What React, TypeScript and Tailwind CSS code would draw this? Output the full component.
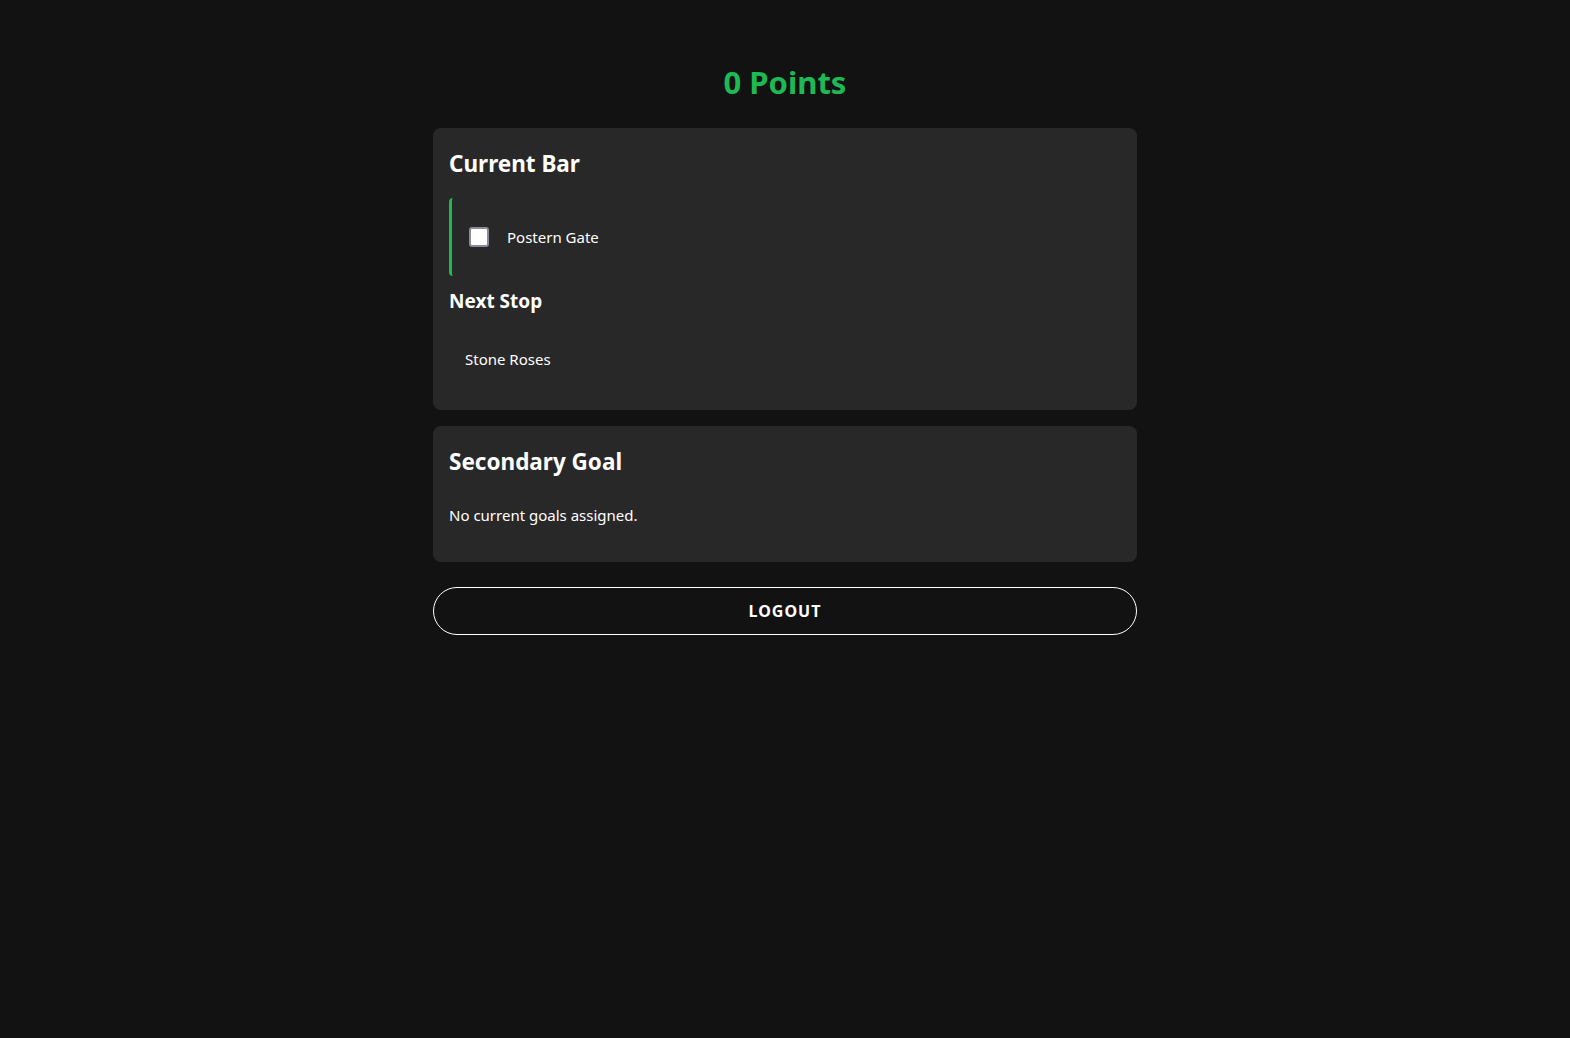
import { useState } from "react";

const font = { fontFamily: '"Noto Sans", "Open Sans", sans-serif' };

export default function App() {
  const [done, setDone] = useState(false);

  return (
    <div className="min-h-screen bg-[#121212] text-white" style={font}>
      <div className="mx-auto w-[704px] pt-[58px]">
        <h1 className="text-center text-[31px] leading-[48px] font-bold text-[#1db954]">
          0 Points
        </h1>

        {/* Current bar card */}
        <section className="mt-[22px] rounded-lg bg-[#282828] px-4 pt-[18px] pb-[23px]">
          <h2 className="text-[22.5px] leading-[36px] font-bold">Current Bar</h2>
          <div className="mt-[16px] flex h-[78px] items-center rounded-l-sm border-l-[3px] border-[#1db954] pl-[17px]">
            <input
              type="checkbox"
              checked={done}
              onChange={() => setDone(!done)}
              className="h-5 w-5 cursor-pointer appearance-none rounded-[3px] border-2 border-[#8a8a99] bg-white checked:bg-[#1db954]"
            />
            <span className="ml-[18px] text-[15px] leading-6">Postern Gate</span>
          </div>
          <h3 className="mt-[10px] text-[19px] leading-[30px] font-bold">Next Stop</h3>
          <div className="mt-[15px] px-4 py-4 text-[15px] leading-6">Stone Roses</div>
        </section>

        {/* Secondary goal card */}
        <section className="mt-4 rounded-lg bg-[#282828] px-4 pt-[18px] pb-[35px]">
          <h2 className="text-[22.5px] leading-[36px] font-bold">Secondary Goal</h2>
          <p className="mt-[23px] text-[15px] leading-6">No current goals assigned.</p>
        </section>

        <button className="mt-[25px] h-12 w-full rounded-full border border-white bg-transparent text-[16px] font-bold uppercase tracking-[1px] text-white">
          Logout
        </button>
      </div>
    </div>
  );
}
